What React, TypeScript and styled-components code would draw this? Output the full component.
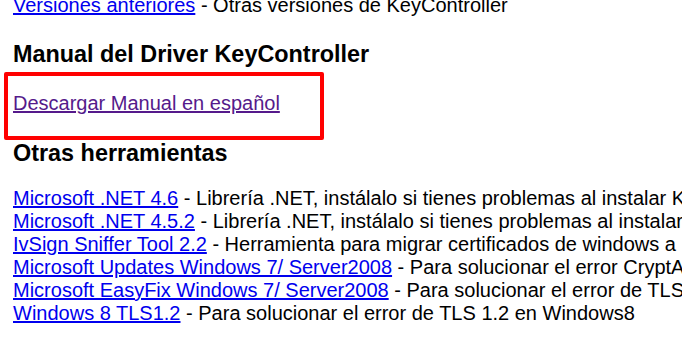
import React from "react";
import styled, { createGlobalStyle } from "styled-components";

const Global = createGlobalStyle`
  html, body {
    margin: 0;
    padding: 0;
    background: #ffffff;
    overflow: hidden;
  }
  body {
    font-family: "Liberation Sans", Arial, sans-serif;
    font-size: 20px;
    color: #000000;
  }
`;

const Page = styled.div`
  position: relative;
  padding: 0 0 0 13px;
  white-space: nowrap;
  line-height: normal;
`;

const Para = styled.p<{ $top: number }>`
  margin: ${(p) => p.$top}px 0 0 0;
  line-height: 23px;
`;

const Heading = styled.h3<{ $top: number }>`
  margin: ${(p) => p.$top}px 0 0 0;
  font-size: 23.4px;
  font-weight: bold;
  line-height: 27px;
`;

const Link = styled.a<{ $visited?: boolean }>`
  color: ${(p) => (p.$visited ? "#551a8b" : "#0000ee")};
  text-decoration: underline;
  cursor: pointer;
`;

const Highlight = styled.div`
  position: absolute;
  left: 4px;
  top: 78px;
  width: 312px;
  height: 60px;
  border: 4px solid #ff0000;
  border-radius: 2px;
  pointer-events: none;
`;

const tools = [
  {
    name: "Microsoft .NET 4.6",
    desc: "Librería .NET, instálalo si tienes problemas al instalar KeyController",
  },
  {
    name: "Microsoft .NET 4.5.2",
    desc: "Librería .NET, instálalo si tienes problemas al instalar KeyController",
  },
  {
    name: "IvSign Sniffer Tool 2.2",
    desc: "Herramienta para migrar certificados de windows a KeyController",
  },
  {
    name: "Microsoft Updates Windows 7/ Server2008",
    desc: "Para solucionar el error CryptAcquireContext",
  },
  {
    name: "Microsoft EasyFix Windows 7/ Server2008",
    desc: "Para solucionar el error de TLS 1.2",
  },
  {
    name: "Windows 8 TLS1.2",
    desc: "Para solucionar el error de TLS 1.2 en Windows8",
  },
];

export default function App() {
  return (
    <>
      <Global />
      <Page>
        <Para $top={-6}>
          <Link>Versiones anteriores</Link> - Otras versiones de KeyController
        </Para>
        <Heading $top={24}>Manual del Driver KeyController</Heading>
        <Para $top={24}>
          <Link $visited>Descargar Manual en español</Link>
        </Para>
        <Heading $top={25}>Otras herramientas</Heading>
        <Para $top={20}>
          {tools.map((t, i) => (
            <React.Fragment key={t.name}>
              <Link>{t.name}</Link> - {t.desc}
              {i < tools.length - 1 && <br />}
            </React.Fragment>
          ))}
        </Para>
        <Highlight />
      </Page>
    </>
  );
}
